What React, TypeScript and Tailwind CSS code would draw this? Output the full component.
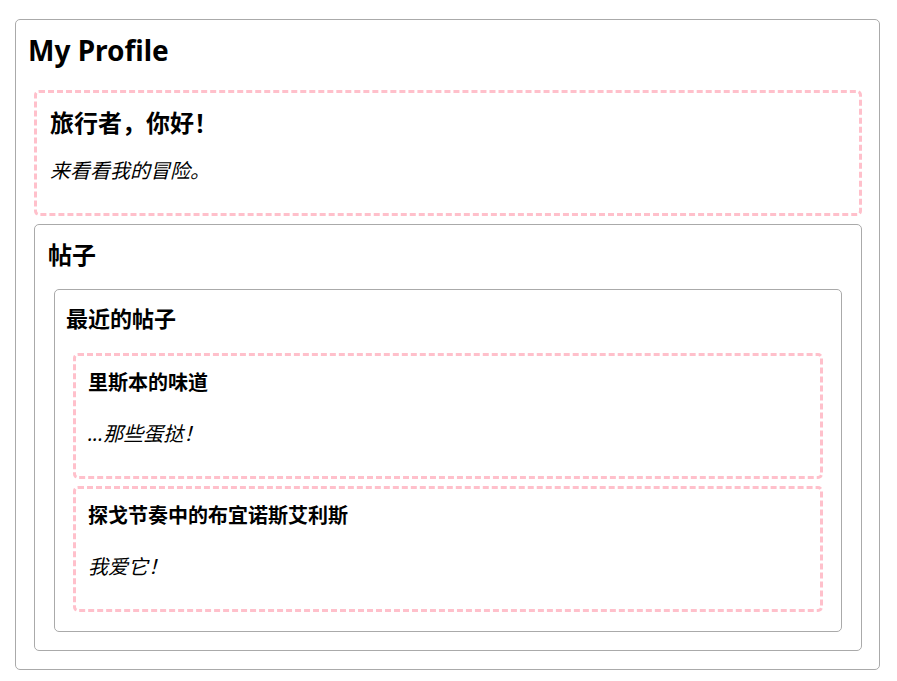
import React from 'react';

interface Post {
  title: string;
  body: string;
}

const posts: Post[] = [
  { title: '里斯本的味道', body: '...那些蛋挞！' },
  { title: '探戈节奏中的布宜诺斯艾利斯', body: '我爱它！' },
];

const PostCard: React.FC<{ post: Post }> = ({ post }) => (
  <div className="mx-[7px] rounded-[5px] border-[3px] border-dashed border-[#ffc0cb] px-[12px] pt-[14px] pb-[29px]">
    <h4 className="text-[20px] font-bold leading-[26px]">{post.title}</h4>
    <p className="mt-[25px] text-[20px] italic leading-[26px]">{post.body}</p>
  </div>
);

export default function App() {
  return (
    <div className="min-h-screen bg-white pt-[19px] pl-[15px] pr-[17px] pb-[11px] font-['Noto_Sans','Noto_Sans_CJK_SC',sans-serif] text-black">
      <div className="rounded-[5px] border border-[#aaaaaa] pl-[12px] pr-[11px] pt-[13px] pb-[18px]">
        <h1 className="text-[28px] font-bold leading-[34px]">My Profile</h1>

        <div className="mx-[6px] mt-[23px] rounded-[5px] border-[3px] border-dashed border-[#ffc0cb] px-[13px] pt-[15px] pb-[29px]">
          <h2 className="text-[24px] font-bold leading-[30px]">旅行者，你好！</h2>
          <p className="mt-[20px] text-[20px] italic leading-[26px]">来看看我的冒险。</p>
        </div>

        <div className="mx-[6px] mt-[8px] rounded-[5px] border border-[#aaaaaa] px-[13px] pt-[15px] pb-[18px]">
          <h2 className="text-[24px] font-bold leading-[30px]">帖子</h2>

          <div className="mx-[6px] mt-[19px] rounded-[5px] border border-[#aaaaaa] px-[11px] pt-[14px] pb-[19px]">
            <h3 className="text-[22px] font-bold leading-[28px]">最近的帖子</h3>
            <div className="mt-[21px] flex flex-col gap-[7px]">
              {posts.map(p => (
                <PostCard key={p.title} post={p} />
              ))}
            </div>
          </div>
        </div>
      </div>
    </div>
  );
}
